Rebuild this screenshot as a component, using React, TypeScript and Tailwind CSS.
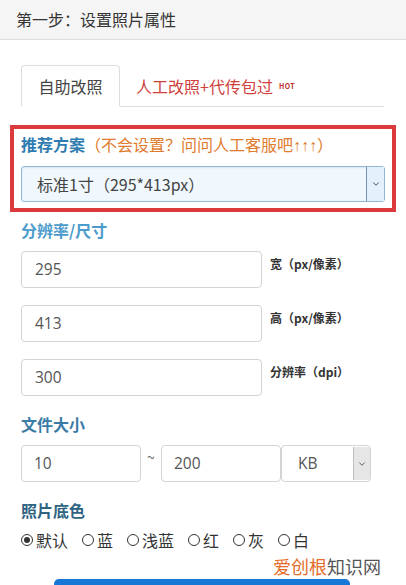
import { ChevronDown } from 'lucide-react';

const font = { fontFamily: '"Noto Sans CJK SC", sans-serif' };

function Field({ value, label }: { value: string; label: string }) {
    return (
        <div className="flex items-start">
            <div className="w-[241px] h-[37px] border border-[#d4d4d4] rounded-[4px] bg-white flex items-center pl-[13px] text-[15.5px] text-[#555] font-['Open_Sans',sans-serif]">
                {value}
            </div>
            <div className="ml-[8px] mt-[4px] text-[12px] font-bold text-[#333] leading-[18px]">{label}</div>
        </div>
    );
}

function Radio({ label, checked }: { label: string; checked?: boolean }) {
    return (
        <div className="flex items-center mr-[14px]">
            <span className="w-[12px] h-[12px] rounded-full border border-[#333] flex items-center justify-center mr-[3px]">
                {checked && <span className="w-[6px] h-[6px] rounded-full bg-[#333]" />}
            </span>
            <span>{label}</span>
        </div>
    );
}

export default function App() {
    return (
        <div className="relative w-[406px] h-[585px] overflow-hidden bg-white text-[#333]" style={font}>
            {/* Header */}
            <div className="h-[40px] bg-[#f5f5f5] border-b border-[#dedede] flex items-center pl-[16px] pb-[2px] text-[16px] text-[#333]">
                第一步：设置照片属性
            </div>

            <div className="px-[10px]">
                {/* Tabs */}
                <div className="mt-[25px] ml-[11px] mr-[12px] flex items-end border-b border-[#dedede]">
                    <div className="w-[99px] h-[42px] -mb-px border border-[#dedede] border-b-white rounded-t-[4px] bg-white flex items-center justify-center text-[16px] text-[#444]">
                        自助改照
                    </div>
                    <div className="h-[41px] flex items-center pl-[16px] text-[16px] text-[#d0403c]">
                        人工改照+代传包过
                        <span className="ml-[6px] mt-[2px] text-[7px] font-bold tracking-[0.5px] text-[#c0302c]">HOT</span>
                    </div>
                </div>

                {/* Recommended */}
                <div className="mt-[18px] border-[4px] border-[#dc3a3d] pt-[4px] pb-[6px] px-[7px]">
                    <div className="text-[16px] leading-[22px] whitespace-nowrap">
                        <span className="font-bold text-[#2f7cb0]">推荐方案</span>
                        <span className="text-[#e07b2c]">
                            （不会设置？问问人工客服吧<span className="font-['Liberation_Sans',sans-serif]">↑↑↑</span>）
                        </span>
                    </div>
                    <div className="mt-[9px] h-[36px] flex border border-[#8fb7d8] rounded-[3px] bg-[#f0f8fd] shadow-[inset_0_1px_2px_rgba(0,0,0,0.08)]">
                        <div className="flex-1 flex items-center pl-[15px] text-[16px] text-[#444]">
                            标准1寸（295*413px）
                        </div>
                        <div className="w-[18px] border-l border-[#6d93b6] bg-[#e3f1fb] flex items-center justify-center">
                            <ChevronDown className="w-[10px] h-[10px] text-[#333]" strokeWidth={2} />
                        </div>
                    </div>
                </div>

                {/* Resolution */}
                <div className="px-[11px]">
                    <div className="mt-[7px] text-[16px] leading-[22px] font-bold text-[#4b9bcc]">分辨率/尺寸</div>
                    <div className="mt-[10px] flex flex-col gap-[17px]">
                        <Field value="295" label="宽（px/像素）" />
                        <Field value="413" label="高（px/像素）" />
                        <Field value="300" label="分辨率（dpi）" />
                    </div>

                    {/* File size */}
                    <div className="mt-[17px] text-[16px] leading-[22px] font-bold text-[#3b7ca6]">文件大小</div>
                    <div className="mt-[10px] flex items-start">
                        <div className="w-[120px] h-[37px] border border-[#d4d4d4] rounded-[4px] flex items-center pl-[12px] text-[15.5px] text-[#555] font-['Open_Sans',sans-serif]">10</div>
                        <div className="w-[20px] text-center text-[14px] text-[#666] leading-[16px] mt-[4px]">~</div>
                        <div className="w-[120px] h-[37px] border border-[#d4d4d4] rounded-[4px] flex items-center pl-[12px] text-[15.5px] text-[#555] font-['Open_Sans',sans-serif]">200</div>
                        <div className="w-[90px] h-[37px] border border-[#d4d4d4] rounded-[4px] flex">
                            <div className="flex-1 flex items-center pl-[16px] text-[15.5px] text-[#555] font-['Open_Sans',sans-serif]">KB</div>
                            <div className="w-[17px] my-[1px] border-l border-[#bdbdbd] bg-[#e6e6e6] flex items-center justify-center">
                                <ChevronDown className="w-[10px] h-[10px] text-[#444]" strokeWidth={2} />
                            </div>
                        </div>
                    </div>

                    {/* Background colour */}
                    <div className="mt-[17px] text-[16px] leading-[22px] font-bold text-[#2e6482]">照片底色</div>
                    <div className="mt-[9px] flex items-center text-[16px] leading-[20px] text-[#333]">
                        <Radio label="默认" checked />
                        <Radio label="蓝" />
                        <Radio label="浅蓝" />
                        <Radio label="红" />
                        <Radio label="灰" />
                        <Radio label="白" />
                    </div>
                </div>

                <div className="mt-[29px] ml-[44px] w-[296px] h-[20px] rounded-t-[5px] bg-[#1677d6]" />
            </div>

            {/* Watermark */}
            <div className="absolute left-[273px] top-[554px] text-[18px] leading-[24px] bg-white/80">
                <span className="text-[#e56d2a]">爱创根</span>
                <span className="text-[#555]">知识网</span>
            </div>
        </div>
    );
}
